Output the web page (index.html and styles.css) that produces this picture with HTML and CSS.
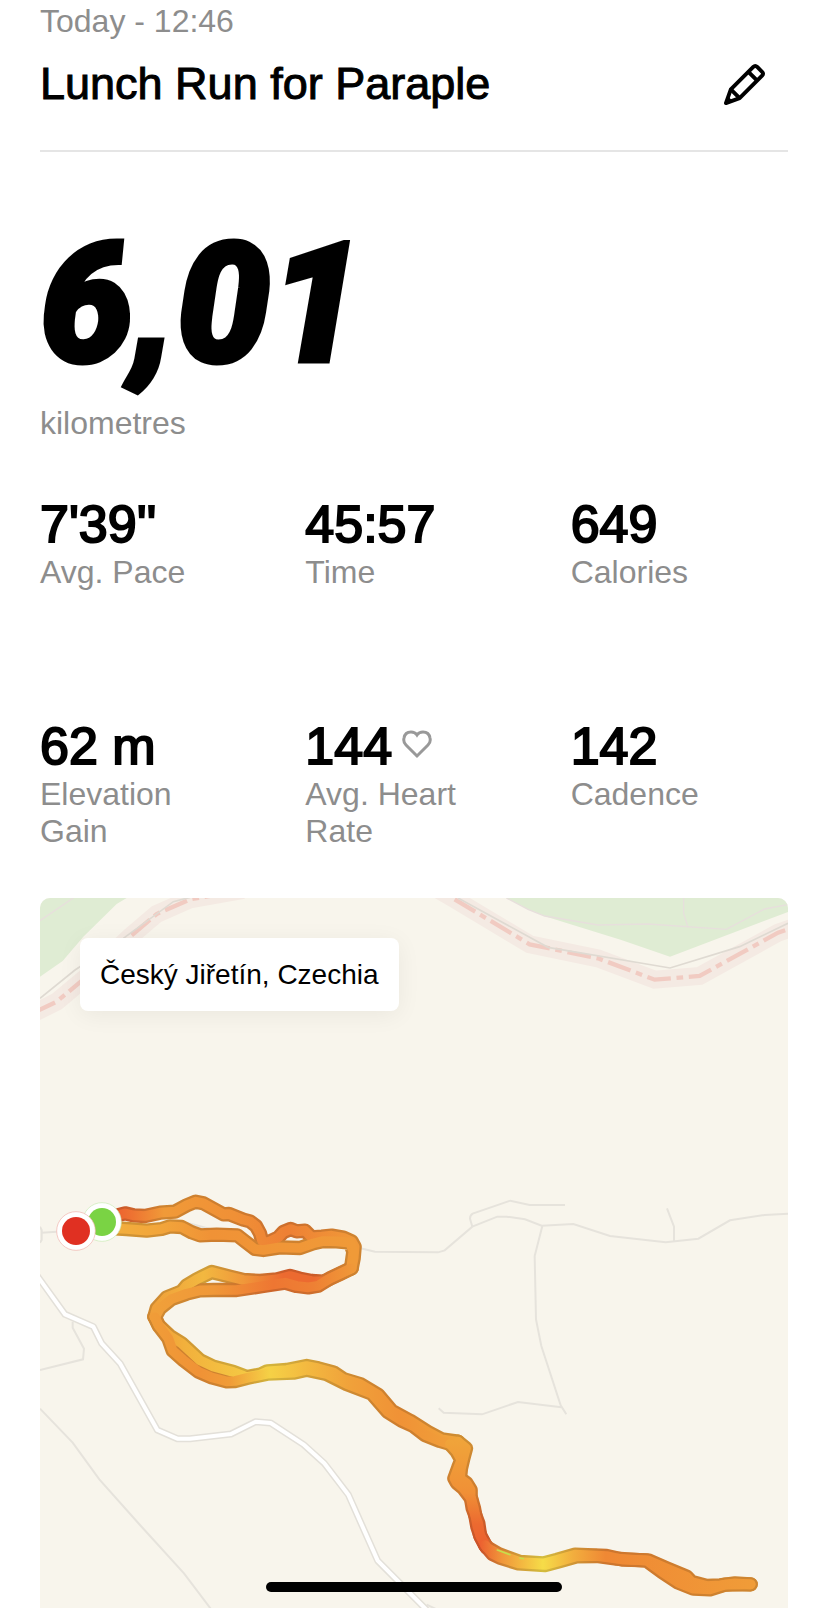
FILE: index.html
```html
<!DOCTYPE html>
<html lang="en">
<head>
    <meta charset="UTF-8">
    <title>Lunch Run for Paraple</title>
    <meta name="viewport" content="width=device-width, initial-scale=1.0">
    <link rel="stylesheet" href="styles.css">
</head>
<body>
    <main class="activity">
        <header class="activity-header">
            <p class="muted">Today - 12:46</p>
            <div class="title-row">
                <h1>Lunch Run for Paraple</h1>
                <button type="button" class="edit-btn" aria-label="Edit name">
                    <svg viewBox="0 0 44 44" fill="none" stroke="#000" stroke-width="4" stroke-linejoin="round">
                        <path d="M3 41 L8 27 L31 4 Q33 2 35 4 L40 9 Q42 11 40 13 L17 36 Z"/>
                        <path d="M26 9 L35 18 M8 27 L17 36"/>
                        <path d="M2 42 L5 34 L10 39 Z" fill="#000" stroke="none"/>
                    </svg>
                </button>
            </div>
        </header>

        <section class="distance">
            <div class="distance-value">6,01</div>
            <p class="muted">kilometres</p>
        </section>

        <section class="stats">
            <div class="stat">
                <div class="stat-value">7'39''</div>
                <p class="muted">Avg. Pace</p>
            </div>
            <div class="stat">
                <div class="stat-value">45:57</div>
                <p class="muted">Time</p>
            </div>
            <div class="stat">
                <div class="stat-value">649</div>
                <p class="muted">Calories</p>
            </div>
            <div class="stat">
                <div class="stat-value">62 m</div>
                <p class="muted">Elevation Gain</p>
            </div>
            <div class="stat">
                <div class="stat-value">
                    144
                    <svg class="heart" viewBox="0 0 30 32" fill="none" stroke="#999" stroke-width="3">
                        <path d="M15 26 L4 15 Q1 12 2 8 Q3 2 9 2 Q13 2 15 5 Q17 2 21 2 Q27 2 28 8 Q29 12 26 15 Z"/>
                    </svg>
                </div>
                <p class="muted">Avg. Heart Rate</p>
            </div>
            <div class="stat">
                <div class="stat-value">142</div>
                <p class="muted">Cadence</p>
            </div>
        </section>

        <section class="map">
            <svg class="map-canvas" viewBox="30 -846 2244 2130" fill="none">
                <defs>
                    <linearGradient id="top-a" gradientUnits="userSpaceOnUse" x1="260" y1="0" x2="970" y2="0">
                        <stop offset="0" stop-color="#ec6330"/>
                        <stop offset=".07" stop-color="#ee7432"/>
                        <stop offset=".2" stop-color="#f09a38"/>
                        <stop offset=".5" stop-color="#f09036"/>
                        <stop offset=".72" stop-color="#ee8034"/>
                        <stop offset="1" stop-color="#f09838"/>
                    </linearGradient>
                    <linearGradient id="top-b" gradientUnits="userSpaceOnUse" x1="260" y1="0" x2="970" y2="0">
                        <stop offset="0" stop-color="#f2ae3d"/>
                        <stop offset=".2" stop-color="#f2a43a"/>
                        <stop offset=".4" stop-color="#f09236"/>
                        <stop offset="1" stop-color="#f09a38"/>
                    </linearGradient>
                    <linearGradient id="bend-a" gradientUnits="userSpaceOnUse" x1="370" y1="0" x2="970" y2="0">
                        <stop offset="0" stop-color="#f0a03a"/>
                        <stop offset=".25" stop-color="#f2b840"/>
                        <stop offset=".45" stop-color="#f0983a"/>
                        <stop offset=".65" stop-color="#ec6a30"/>
                        <stop offset=".8" stop-color="#ec6a30"/>
                        <stop offset="1" stop-color="#f09838"/>
                    </linearGradient>
                    <linearGradient id="bend-b" gradientUnits="userSpaceOnUse" x1="370" y1="0" x2="970" y2="0">
                        <stop offset="0" stop-color="#f0a03a"/>
                        <stop offset=".3" stop-color="#f09838"/>
                        <stop offset=".6" stop-color="#ee7632"/>
                        <stop offset=".8" stop-color="#ee8034"/>
                        <stop offset="1" stop-color="#f09838"/>
                    </linearGradient>
                    <linearGradient id="middle-a" gradientUnits="userSpaceOnUse" x1="370" y1="0" x2="1290" y2="0">
                        <stop offset="0" stop-color="#f09c38"/>
                        <stop offset=".1" stop-color="#f2b03c"/>
                        <stop offset=".38" stop-color="#f5d146"/>
                        <stop offset=".5" stop-color="#f3b940"/>
                        <stop offset=".65" stop-color="#f0a03a"/>
                        <stop offset=".8" stop-color="#f09236"/>
                        <stop offset="1" stop-color="#f0a43a"/>
                    </linearGradient>
                    <linearGradient id="middle-b" gradientUnits="userSpaceOnUse" x1="370" y1="0" x2="1290" y2="0">
                        <stop offset="0" stop-color="#f09c38"/>
                        <stop offset=".15" stop-color="#f09236"/>
                        <stop offset=".25" stop-color="#f09c38"/>
                        <stop offset=".38" stop-color="#f5d146"/>
                        <stop offset=".5" stop-color="#f3b940"/>
                        <stop offset=".65" stop-color="#f0a03a"/>
                        <stop offset=".8" stop-color="#f09236"/>
                        <stop offset="1" stop-color="#f0a03a"/>
                    </linearGradient>
                    <linearGradient id="drop" gradientUnits="userSpaceOnUse" x1="0" y1="780" x2="0" y2="1095">
                        <stop offset="0" stop-color="#f0a43a"/>
                        <stop offset=".5" stop-color="#f09036"/>
                        <stop offset=".8" stop-color="#ec6a30"/>
                        <stop offset="1" stop-color="#ec6030"/>
                    </linearGradient>
                    <linearGradient id="finish" gradientUnits="userSpaceOnUse" x1="1350" y1="0" x2="2170" y2="0">
                        <stop offset="0" stop-color="#ec6030"/>
                        <stop offset=".08" stop-color="#f0963a"/>
                        <stop offset=".23" stop-color="#f6dc48"/>
                        <stop offset=".34" stop-color="#f2ae3e"/>
                        <stop offset=".46" stop-color="#ef8834"/>
                        <stop offset="1" stop-color="#f09c38"/>
                    </linearGradient>

                    <g id="leg-a">
                        <path stroke="url(#top-a)" d="M215 125 L262 106 285 100 310 106 345 108 390 98 435 95 470 76 497 65 520 70 580 103 597 102 640 119 660 124 678 138 690 160 696 182 712 188 745 172 760 156 782 147 800 154 825 152 845 172 875 170 905 167 940 173 965 184 974 200 971 235 965 265"/>
                        <path stroke="url(#bend-a)" d="M965 265 L930 282 880 305 845 303 810 296 780 288 740 298 690 303 640 300 600 290 545 276 500 298 470 316 455 334 410 352 380 385 373 410"/>
                        <path stroke="url(#middle-a)" d="M373 410 L385 435 420 468 455 490 510 541 550 560 610 576 650 591 690 584 712 574 770 570 830 558 865 565 910 577 940 597 990 612 1045 645 1085 692 1140 722 1194 756 1235 778 1284 785"/>
                        <path stroke="url(#drop)" d="M1284 785 L1308 805 1300 835 1293 865 1290 895 1310 910 1322 930 1322 950 1332 985 1342 1040 1352 1070 1370 1102"/>
                        <path stroke="url(#finish)" d="M1370 1102 L1405 1122 1470 1146 1540 1150 1580 1140 1635 1124 1730 1128 1780 1139 1855 1141 1910 1165 1970 1190 1985 1206 2030 1218 2070 1216 2115 1210 2162 1213"/>
                    </g>
                    <g id="leg-b">
                        <path stroke="url(#top-b)" d="M215 143 L290 147 350 152 395 147 420 139 455 141 485 157 510 166 560 164 622 166 645 184 675 207 700 210 750 202 810 204 850 190 880 183 920 184 960 188 970 215 963 265"/>
                        <path stroke="url(#bend-b)" d="M963 265 L900 295 865 317 835 322 800 318 765 308 700 318 620 330 550 330 510 331 470 341 425 357 390 385 375 412"/>
                        <path stroke="url(#middle-b)" d="M375 412 L388 440 415 475 428 512 460 540 505 575 545 592 590 604 615 603 650 594 712 581 790 578 830 569 890 582 950 612 1025 641 1072 695 1115 722 1150 738 1185 765 1230 783 1260 792"/>
                        <path stroke="url(#drop)" d="M1260 792 L1280 815 1294 840 1285 862 1273 895 1280 908 1300 925 1323 955 1328 985 1345 1030 1350 1065 1365 1095"/>
                        <path stroke="url(#finish)" d="M1365 1095 L1388 1122 1410 1133 1465 1150 1545 1155 1590 1143 1640 1129 1700 1128 1760 1136 1850 1142 1895 1175 1945 1208 1990 1226 2040 1228 2085 1214 2162 1213"/>
                    </g>
                </defs>

                <!-- forest -->
                <g fill="#dfecd3">
                    <path d="M30 -846 H290 L260 -828 160 -730 98 -657 30 -610 Z"/>
                    <path d="M1429 -846 H2274 V-804 L1920 -670 1774 -720 1554 -788 1494 -812 Z"/>
                </g>
                <g stroke="#e7dfdc" stroke-width="4">
                    <path d="M30 -778 L130 -846"/>
                    <path d="M1429 -846 L1494 -812 1544 -792 1704 -765 1854 -768 2089 -752 2204 -813 2274 -826"/>
                    <path d="M1961 -846 V-800 L1974 -758"/>
                </g>

                <!-- state border -->
                <g stroke="#f4eae3" stroke-width="54">
                    <path d="M10 -500 L80 -535 200 -635 300 -730 380 -798 480 -842 640 -870"/>
                    <path d="M1194 -889 L1274 -842 1499 -707 1704 -665 1874 -601 2009 -612 2244 -742 2304 -762"/>
                </g>
                <g stroke="#f1cbc2" stroke-width="13" stroke-dasharray="72 17 20 17">
                    <path d="M10 -502 L80 -535 200 -635 300 -730 380 -798 480 -842 640 -870"/>
                    <path d="M1274 -842 L1499 -707 1704 -665 1874 -601 2009 -612 2244 -742 2304 -762"/>
                </g>
                <g stroke="#dfdad2" stroke-width="5">
                    <path d="M30 -545 L135 -630 280 -725 430 -835 480 -848"/>
                    <path d="M1284 -846 L1554 -698 1920 -636 2129 -700 2274 -770"/>
                </g>

                <!-- tracks -->
                <g stroke="#e6e3dc" stroke-width="6">
                    <path d="M30 140 L35 150 V180 L30 188 M35 158 L80 155 M470 128 L560 152"/>
                    <path d="M985 203 L1035 215 1224 217 1244 211 1327 140 1402 110 1430 110 1485 118 1535 137 1630 132 1740 168 1907 187 2005 176 2100 121 2204 105 2274 101"/>
                    <path d="M1327 140 L1320 116 Q1320 106 1328 101 L1441 62 1499 75 H1605"/>
                    <path d="M1911 85 L1932 140 V185"/>
                    <path d="M1537 138 L1514 228 1518 418 1534 498 1592 676 1609 703"/>
                    <path d="M1226 685 L1241 698 1356 703 1464 666 1594 682"/>
                    <path d="M128 425 V443 L162 506 159 538 30 570"/>
                    <path d="M30 686 L128 788 208 898 330 1035 462 1180 545 1290"/>
                    <path d="M1190 1274 L1220 1288"/>
                </g>

                <!-- road -->
                <g stroke-linejoin="round">
                    <path stroke="#e3e0d9" stroke-width="21" d="M20 285 L105 403 190 440 215 490 270 550 382 750 442 776 480 776 603 762 677 725 722 729 820 793 883 850 955 944 1043 1142 1190 1290"/>
                    <path stroke="#fff" stroke-width="12" d="M20 285 L105 403 190 440 215 490 270 550 382 750 442 776 480 776 603 762 677 725 722 729 820 793 883 850 955 944 1043 1142 1190 1290"/>
                </g>

                <!-- route -->
                <g stroke-linecap="round" stroke-linejoin="round">
                    <use href="#leg-a" class="route-edge"/>
                    <use href="#leg-b" class="route-edge"/>
                    <use href="#leg-a" class="route-fill"/>
                    <use href="#leg-b" class="route-fill"/>
                    <path stroke="#c5df4c" stroke-width="5" d="M1402 1110 L1440 1124 M1470 1134 L1480 1136"/>
                </g>

                <circle cx="216" cy="126" r="58" fill="#fff" stroke="#c9ecb4" stroke-width="2"/>
                <circle cx="216" cy="126" r="42" fill="#7ad344"/>
                <circle cx="138" cy="153" r="58" fill="#fff" stroke="#f0b0aa" stroke-width="2"/>
                <circle cx="138" cy="153" r="42" fill="#e03022"/>
            </svg>
            <div class="map-label">Český Jiřetín, Czechia</div>
        </section>
    </main>
    <div class="home-indicator"></div>
</body>
</html>
```
FILE: styles.css
```css
* {
    box-sizing: border-box;
    margin: 0;
    padding: 0;
}

body {
    font-family: "Liberation Sans", Arial, sans-serif;
    background: #fff;
    color: #000;
}

.activity {
    padding: 3px 40px 0;
}

.muted {
    font-size: 32px;
    line-height: 37px;
    color: #8d8d8d;
}

.activity-header {
    padding-bottom: 40px;
    border-bottom: 2px solid #e5e5e5;
}

.title-row {
    display: flex;
    align-items: center;
    justify-content: space-between;
    margin-top: 18px;
    padding-right: 22px;
}

h1 {
    font-size: 45px;
    line-height: 52px;
    font-weight: normal;
    -webkit-text-stroke: 1px #000;
}

.edit-btn {
    width: 43px;
    height: 43px;
    border: none;
    background: none;
    cursor: pointer;
}

.edit-btn svg {
    display: block;
    width: 100%;
}

.distance {
    padding: 68px 0 52px;
}

.distance-value {
    margin-bottom: 15px;
    font-family: Roboto, sans-serif;
    font-size: 166px;
    line-height: 170px;
    font-weight: 900;
    font-style: italic;
    -webkit-text-stroke: 5px #000;
}

.stats {
    display: grid;
    grid-template-columns: repeat(3, 1fr);
    gap: 125px 48px;
}

.stat-value {
    display: flex;
    align-items: center;
    gap: 10px;
    font-size: 52px;
    line-height: 60px;
    -webkit-text-stroke: 2px #000;
}

.stat .muted {
    max-width: 200px;
}

.heart {
    width: 30px;
    height: 32px;
}

.map {
    position: relative;
    margin-top: 48px;
    border-radius: 10px 10px 0 0;
    background: #f8f5ec;
    overflow: hidden;
}

.map-canvas {
    display: block;
    width: 100%;
}

.map-label {
    position: absolute;
    top: 40px;
    left: 40px;
    padding: 20px;
    border-radius: 8px;
    background: #fff;
    font-size: 28px;
    line-height: 33px;
    box-shadow: 0 4px 24px rgba(0, 0, 0, 0.06);
}

.route-edge {
    stroke-width: 43px;
    filter: brightness(0.86);
}

.route-fill {
    stroke-width: 29px;
}

.home-indicator {
    position: fixed;
    bottom: 16px;
    left: 50%;
    width: 296px;
    height: 10px;
    margin-left: -148px;
    border-radius: 5px;
    background: #000;
}
```
